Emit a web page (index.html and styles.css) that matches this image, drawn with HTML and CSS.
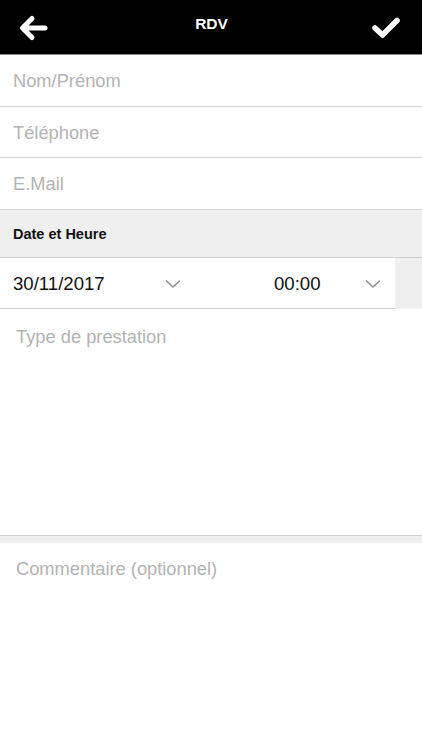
FILE: index.html
```html
<!DOCTYPE html>
<html lang="fr">
<head>
<meta charset="utf-8">
<title>RDV</title>
<link rel="stylesheet" href="styles.css">
</head>
<body>
<div class="app">
  <header class="topbar">
    <svg class="icon back" width="32" height="32" viewBox="0 0 32 32">
      <path d="M28 16 H6 M15 6.5 L5.5 16 L15 25.5" fill="none" stroke="#fff" stroke-width="5" stroke-linecap="round" stroke-linejoin="round"/>
    </svg>
    <h1 class="title">RDV</h1>
    <svg class="icon check" width="32" height="32" viewBox="0 0 32 32">
      <path d="M5 16 L12.5 23 L27 8.5" fill="none" stroke="#fff" stroke-width="5.5" stroke-linecap="round" stroke-linejoin="round"/>
    </svg>
  </header>

  <div class="field">Nom/Prénom</div>
  <div class="field field-short">Téléphone</div>
  <div class="field">E.Mail</div>

  <div class="section-head">Date et Heure</div>

  <div class="date-row">
    <div class="pickers">
      <div class="picker picker-date">
        <span class="value">30/11/2017</span>
        <svg class="chev" width="16" height="10" viewBox="0 0 16 10"><path d="M1.5 2 L8 8 L14.5 2" fill="none" stroke="#8e8e8e" stroke-width="1.6" stroke-linecap="round" stroke-linejoin="round"/></svg>
      </div>
      <div class="picker picker-time">
        <span class="value">00:00</span>
        <svg class="chev" width="16" height="10" viewBox="0 0 16 10"><path d="M1.5 2 L8 8 L14.5 2" fill="none" stroke="#8e8e8e" stroke-width="1.6" stroke-linecap="round" stroke-linejoin="round"/></svg>
      </div>
    </div>
    <div class="side"></div>
  </div>

  <div class="textarea prestation">Type de prestation</div>
  <div class="band"></div>
  <div class="textarea comment">Commentaire (optionnel)</div>
</div>
</body>
</html>
```

FILE: styles.css
```css
* { box-sizing: border-box; margin: 0; padding: 0; }
html, body { background: #fff; }
body {
  font-family: "Liberation Sans", Arial, Helvetica, sans-serif;
  width: 422px;
  height: 750px;
  overflow: hidden;
}
.app { display: flex; flex-direction: column; height: 750px; }

.topbar {
  height: 55px;
  flex: none;
  background: #000;
  border-bottom: 1px solid #8a8a8a;
  display: flex;
  align-items: center;
  justify-content: space-between;
  padding: 2px 20px 0 17px;
}
.title {
  color: #fff;
  font-size: 15.5px;
  font-weight: bold;
  margin-top: -9px;
  margin-left: 4px;
}

.field {
  height: 52px;
  flex: none;
  border-bottom: 1px solid #d4d4d4;
  display: flex;
  align-items: center;
  padding: 1px 0 0 13px;
  color: #b3b3b3;
  font-size: 18.3px;
}
.field-short { height: 51px; }

.section-head {
  height: 48px;
  flex: none;
  background: #efefef;
  border-bottom: 1px solid #d0d0d0;
  display: flex;
  align-items: center;
  padding: 0 0 0 13px;
  font-size: 14.5px;
  font-weight: bold;
  color: #111;
}

.date-row {
  height: 51px;
  flex: none;
  display: flex;
}
.pickers {
  width: 395px;
  display: flex;
  border-bottom: 1px solid #d0d0d0;
}
.side { flex: 1; background: #efefef; }
.picker {
  display: flex;
  align-items: center;
  padding-top: 2px;
  font-size: 18.6px;
  color: #111;
}
.picker-date { width: 274px; padding-left: 13px; }
.picker-date .chev { margin-left: 60px; }
.picker-time { flex: 1; }
.picker-time .chev { margin-left: 44px; }

.textarea {
  padding: 17px 16px;
  color: #b3b3b3;
  font-size: 18.3px;
}
.prestation {
  height: 227px;
  flex: none;
  border-bottom: 1px solid #cfcfcf;
}
.band { height: 7px; flex: none; background: #efefef; }
.comment { flex: 1; padding-top: 15px; }
```
